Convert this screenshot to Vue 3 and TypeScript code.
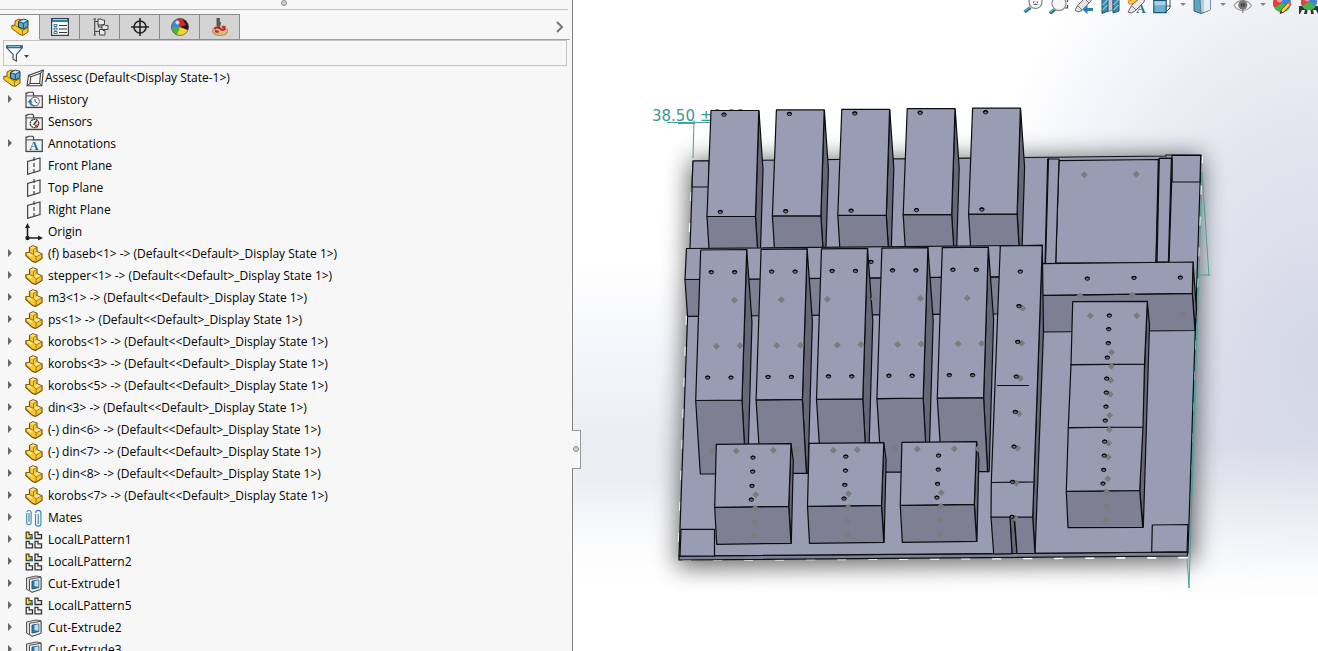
<script setup lang="ts">
import { ref } from 'vue'

type Pt = [number, number]
interface Face { pts: string; tone: 'top' | 'front' | 'side' }
interface TreeItem { label: string; icon: string; open: boolean }

const STATE = '(Default<<Default>_Display State 1>)'
const item = (icon: string, label: string, open = true): TreeItem => ({ icon, label, open })
const part = (name: string): TreeItem => item('part', `${name} -> ${STATE}`)

const tabs = [
  { icon: 'assembly', label: 'FeatureManager' },
  { icon: 'props', label: 'PropertyManager' },
  { icon: 'config', label: 'ConfigurationManager' },
  { icon: 'target', label: 'DimXpertManager' },
  { icon: 'ball', label: 'DisplayManager' },
  { icon: 'cam', label: 'CAM Manager' }
]
const activeTab = ref(0)
const filter = ref('')

const items: TreeItem[] = [
  item('history', 'History'),
  item('sensors', 'Sensors', false),
  item('annot', 'Annotations'),
  item('plane', 'Front Plane', false),
  item('plane', 'Top Plane', false),
  item('plane', 'Right Plane', false),
  item('origin', 'Origin', false),
  part('(f) baseb<1>'),
  part('stepper<1>'),
  part('m3<1>'),
  part('ps<1>'),
  part('korobs<1>'),
  part('korobs<3>'),
  part('korobs<5>'),
  part('din<3>'),
  part('(-) din<6>'),
  part('(-) din<7>'),
  part('(-) din<8>'),
  part('korobs<7>'),
  item('mates', 'Mates'),
  item('pattern', 'LocalLPattern1'),
  item('pattern', 'LocalLPattern2'),
  item('cut', 'Cut-Extrude1'),
  item('pattern', 'LocalLPattern5'),
  item('cut', 'Cut-Extrude2'),
  item('cut', 'Cut-Extrude3')
]

const tools = [
  { icon: 'fit', label: 'Zoom to Fit', menu: false },
  { icon: 'area', label: 'Zoom to Area', menu: false },
  { icon: 'prev', label: 'Previous View', menu: false },
  { icon: 'section', label: 'Section View', menu: false },
  { icon: 'dynamic', label: 'Dynamic Annotation Views', menu: false },
  { icon: 'orient', label: 'View Orientation', menu: true },
  { icon: 'style', label: 'Display Style', menu: true },
  { icon: 'eye', label: 'Hide/Show Items', menu: true },
  { icon: 'appear', label: 'Edit Appearance', menu: false },
  { icon: 'scene', label: 'Apply Scene', menu: false }
]

const face = (tone: Face['tone'], pts: Pt[], dx = 0, dy = 0): Face => ({
  tone,
  pts: pts.map(([x, y]) => `${(x + dx).toFixed(1)},${(y + dy).toFixed(1)}`).join(' ')
})

const backBoxes: Face[] = []
const midBoxes: Face[] = []
const lowBoxes: Face[] = []
const holes: Pt[] = []
const marks: Pt[] = []

for (let i = 0; i < 5; i++) {
  const bx = i * 65.4
  const by = i * -0.6
  backBoxes.push(
    face('side', [[759, 111], [763, 170], [760.5, 249], [757.5, 249], [755.5, 216.5]], bx, by),
    face('front', [[707, 216.5], [755.5, 216.5], [757.5, 249], [709, 249]], bx, by),
    face('top', [[711, 110.5], [758.8, 110.5], [755.5, 216.5], [707, 216.5]], bx, by)
  )
  holes.push([724 + bx, 114.7 + by], [720.3 + bx, 212 + by])

  const mx = i * 60.4
  const my = i * -0.6
  midBoxes.push(
    face('side', [[746.7, 249.5], [752, 322], [747.5, 474], [746, 474], [742, 400]], mx, my),
    face('front', [[695.7, 400.5], [742, 400], [746, 474], [700.3, 474]], mx, my),
    face('top', [[700.7, 250], [746.7, 249.5], [742, 400], [695.7, 400.5]], mx, my)
  )
  holes.push(
    [711.3 + mx, 272.3 + my], [734.7 + mx, 272.3 + my],
    [707.7 + mx, 377.7 + my], [731 + mx, 377.7 + my]
  )
  marks.push([716.5 + mx, 346.2 + my], [740 + mx, 345.8 + my])
}

for (let i = 0; i < 3; i++) {
  const dx = i * 92.8
  const dy = i * -1
  lowBoxes.push(
    face('side', [[791, 443.7], [793.3, 461], [791.3, 543.3], [788.7, 506.3]], dx, dy),
    face('front', [[714.7, 507.3], [788.7, 506.3], [791, 543.3], [716.7, 544.3]], dx, dy),
    face('top', [[716.3, 444.3], [791, 443.7], [788.7, 506.3], [714.7, 507.3]], dx, dy)
  )
  holes.push([753 + dx, 457.7 + dy], [752.7 + dx, 471.7 + dy], [752 + dx, 486 + dy], [751.3 + dx, 499.7 + dy])
  marks.push([755.7 + dx, 494.7 + dy], [755.3 + dx, 508.3 + dy], [754.7 + dx, 522.3 + dy], [754.3 + dx, 536.3 + dy])
}

holes.push(
  [871, 262], [1020.3, 271.7], [1019, 306.3], [1017.7, 342], [1016.3, 376.7], [1015.3, 412],
  [1014, 446.7], [1012.5, 482], [1012, 517], [1087.3, 278.7], [1134, 278], [1180.3, 277.7],
  [1109.3, 315.7], [1108.7, 329.3], [1108.3, 343.3], [1107.3, 357.7], [1106.7, 378.7], [1106.3, 392.7],
  [1106, 406.7], [1105.3, 420.7], [1104.7, 441.7], [1104.3, 455.7], [1103.7, 470], [1103, 483.7]
)
marks.push(
  [734.3, 300.3], [781.3, 299.7], [827.3, 299.3], [874, 299], [920.3, 298.3], [967.3, 298],
  [1022.7, 308.3], [1021.7, 343.3], [1020.3, 378.3], [1019.3, 413.7], [1017.7, 448.3], [1016.3, 483.3], [1015.3, 518.3],
  [1080, 295.7], [1132.3, 295], [1183, 314.7], [1084.3, 174.7], [1136.3, 174.3],
  [1090.3, 315.7], [1136.7, 315.7], [1111.7, 352.3], [1111.3, 366.3], [1110.7, 380.3], [1110.3, 394.3],
  [1109.7, 415.3], [1109.3, 429.7], [1108.7, 443.3], [1108.3, 457.3], [1107.7, 478.7], [1106.7, 492],
  [1106.3, 506.3], [1105.7, 520.7],
  [736.3, 451], [773.3, 450.3], [833.3, 450.3], [857.3, 449.7], [917.3, 449], [954.3, 448.7],
  [712.3, 451], [796.7, 450], [894.3, 449], [978, 448.7]
)

const plate: Face[] = [
  face('front', [[679, 556], [1188, 552], [1187, 556], [679, 560]]),
  face('top', [[693, 161], [1026, 157.5], [1166, 156], [1166, 155], [1201, 155], [1188, 552], [679, 556], [690, 248]]),
  face('top', [[693, 161], [709, 161], [709, 187], [692, 187]]),
  face('top', [[1172, 155.3], [1200.7, 155.3], [1200, 182], [1172, 182]]),
  face('top', [[681, 529.3], [714.5, 529.3], [714.5, 556], [680, 556]]),
  face('top', [[1152.3, 525], [1188, 524.5], [1187, 551.7], [1151.7, 552]]),
  face('top', [[1059, 160.7], [1158.3, 159.5], [1156, 263], [1055.7, 263]]),
  face('side', [[1047.7, 159], [1049.5, 159], [1047, 264], [1045, 264]]),
  face('top', [[1048.5, 159], [1059, 159], [1055.7, 264], [1045.5, 264]]),
  face('side', [[1159.3, 158.3], [1172, 158.3], [1172, 172], [1169, 262], [1156, 262]]),
  face('top', [[1159.3, 158.3], [1171.4, 158.3], [1168.4, 262], [1157, 262]])
]

const rails: Face[] = [
  face('front', [[685, 279.5], [1000, 276.8], [1000, 313.8], [687.5, 316.3]]),
  face('top', [[686.5, 248.5], [1042.3, 245.3], [1042, 276.5], [685, 279.5]])
]

const rightRail: Face[] = [
  face('side', [[1193, 262], [1196.5, 310], [1195, 330.5], [1192.3, 293.3]]),
  face('front', [[1041, 295.3], [1192.3, 293.3], [1195, 330.5], [1043, 332]]),
  face('top', [[1041.7, 263.7], [1193, 262], [1192.3, 293.3], [1041, 295.3]])
]

const stack: Face[] = [
  face('side', [[1147.3, 301.3], [1149.5, 325], [1143.3, 527.3], [1139.7, 490.5]]),
  face('front', [[1066.3, 491.3], [1139.7, 490.5], [1142.7, 527.3], [1068, 527.7]]),
  face('top', [[1068.3, 427.7], [1143, 427], [1139.7, 490.5], [1066.3, 491.3]]),
  face('top', [[1071, 364.7], [1144.5, 364.2], [1143, 427], [1068.3, 427.7]]),
  face('top', [[1072.7, 301.7], [1147.3, 301.3], [1144.5, 364.2], [1071, 364.7]])
]

const column: Face[] = [
  face('side', [[1042.3, 245.3], [1043.5, 331], [1035, 553.5], [1032.7, 517]]),
  face('side', [[1010, 517], [1014, 517], [1017, 553.5], [1012, 553.5]]),
  face('front', [[991, 517], [1010, 517], [1012, 553.7], [993.7, 554]]),
  face('front', [[1014.5, 517], [1032.7, 517], [1035, 553.5], [1017, 553.5]]),
  face('top', [[1000.3, 246], [1042.3, 245.3], [1032.7, 517], [991, 517], [991.3, 482]])
]

const scene: Face[] = [...plate, ...backBoxes, ...rails, ...midBoxes, ...lowBoxes, ...rightRail, ...stack, ...column]
</script>

<template>
  <svg class="defs" aria-hidden="true">
    <symbol id="i-part" viewBox="0 0 18 18">
      <path d="M4.500 2.500 8 .8l4 1.400v4.600l5 2v4.600l-6.500 4-3.200-1L.8 10.500V7.800l3.700-.4z" fill="#f6c72f" stroke="#755511" stroke-width="1.200" stroke-linejoin="round" />
      <path d="m4.800 2.800 3.200-1.500 3.500 1.200-3 1.600zM8.700 9.200l3.400-1.900 4.300 1.700-5.300 3zM1.500 8.200l3-.4 3 3-2.300 1z" fill="#ffe794" />
      <path d="M8.500 4.200v5l2.600 2.900v4.800M8.500 4.200l3-1.600M11 12l5.500-3M4.600 7.500l3.900 1.800" fill="none" stroke="#8b6818" stroke-width=".8" />
    </symbol>
    <symbol id="i-assembly" viewBox="0 0 18 18">
      <path d="M4 3 8 1l3 1v5l6 2v5l-5 3.500-3-1L.8 10.500V7.500L4 7z" fill="#fbcb24" stroke="#7d5c10" stroke-linejoin="round" />
      <path d="m1.500 8 3-.5 7 5v4.300M11.500 12.500l5-2.500" fill="none" stroke="#96701a" stroke-width=".9" />
      <path d="m7.500 3.500 5-2.500 4.500 1.500v6l-4.700 2.500-4.800-2z" fill="#5fa9ca" stroke="#17384b" />
      <path d="m8 3.700 4.500-2.100 3.900 1.200-3.900 2z" fill="#bfe2f2" />
      <path d="m7.800 3.800 4.600 1.500v5.400M12.400 5.300 17 2.800" fill="none" stroke="#17384b" stroke-width=".8" />
    </symbol>
    <symbol id="i-props" viewBox="0 0 18 18">
      <rect x=".6" y=".6" width="16.800" height="16.800" fill="#f6f8f9" stroke="#2f4350" stroke-width="1.200" />
      <path d="M1 1h16v3H1z" fill="#2f7ea3" /><path d="M2 1.500h14" stroke="#9fd4ea" />
      <path d="M3 6.500h3v2H3zM3 10h3v2H3zM3 13.500h3v2H3z" fill="#fff" stroke="#2b6d8e" stroke-width=".9" />
      <path d="M8 7.500h8M8 11h8M8 14.500h8" stroke="#333" stroke-width="1.200" />
    </symbol>
    <symbol id="i-config" viewBox="0 0 18 18">
      <path d="M3.700 1v16M4 3.500h5M4 13.500h6M7.500 4v5h5" fill="none" stroke="#444" stroke-width="1.100" />
      <path d="M7 1h3l1 1h2.500v5H7zM11 6.500h2.500l1 1H17v4h-6zM8.500 11.500H11l1 1h2v4.500H8.500z" fill="#e8e8e8" stroke="#444" />
      <path d="M2.500 1h2.500M2.500 17H5" stroke="#444" />
    </symbol>
    <symbol id="i-target" viewBox="0 0 18 18">
      <circle cx="9" cy="9" r="6" fill="none" stroke="#222" stroke-width="1.600" />
      <path d="M9 0v18M0 9h18" stroke="#222" stroke-width="1.600" />
    </symbol>
    <symbol id="i-ball" viewBox="0 0 18 18">
      <circle cx="9" cy="9" r="8.500" fill="#e3382c" />
      <path d="M9 9 .7 10.500A8.500 8.500 0 0 1 6 1z" fill="#3f86d8" />
      <path d="M9 9 .5 9.500a8.500 8.500 0 0 0 6 7.700z" fill="#46b53b" />
      <path d="m9 9-3 8a8.500 8.500 0 0 0 11-5z" fill="#f5d52a" />
      <path d="M9 9 11 .8A8.500 8.500 0 0 1 17 12z" fill="#1d1d22" />
      <path d="M6 1a8.500 8.500 0 0 1 5-.2L15 7 9 9z" fill="#d8281f" />
      <circle cx="6.500" cy="4.500" r="2" fill="#fff" opacity=".7" />
      <circle cx="9" cy="9" r="8.500" fill="none" stroke="#555" stroke-width=".7" />
    </symbol>
    <symbol id="i-cam" viewBox="0 0 18 20">
      <path d="M1 12v4C2 20.500 16 20.500 17 16v-4z" fill="#d9b878" stroke="#8a6838" stroke-width=".7" />
      <ellipse cx="9" cy="12" rx="8" ry="4" fill="#dcc092" />
      <path d="M3 12.500c1-3 5-2.500 6-.8s4 2.200 6-.2M3.500 14.500l4 1M11.500 9.500l3.500 1" fill="none" stroke="#b92b20" stroke-width="2.600" />
      <path d="M5.500 0h3v5h1.500L8 11.500 5.500 8z" fill="#555c62" stroke="#333" stroke-width=".5" />
    </symbol>
    <symbol id="i-funnel" viewBox="0 0 18 19">
      <path d="M.8 1.500h16.400v2L11 10.500v7l-3.500-2v-5L.8 3.500z" fill="#fff" stroke="#4a4f53" stroke-width="1.300" />
      <path d="M.6 1h16.800v3H.6z" fill="#1e6a8d" /><path d="M2 2.200h13" stroke="#9cd1e6" stroke-width=".9" />
    </symbol>
    <symbol id="i-frame" viewBox="0 0 18 18">
      <path d="M1 16.800 2.500 6.500 17.300 1l-1.500 15.800zM4 14.500l.8-6.700 9.700-3.500-.8 10.200z" fill="#fff" fill-rule="evenodd" stroke="#3c3c3c" stroke-width="1.100" />
      <path d="m2.500 6.500 2.300 1.300M17.300 1l-2.800 3.300M1 16.800l3-2.300M15.800 16.800l-2-2.300" stroke="#3c3c3c" />
    </symbol>
    <symbol id="i-folder" viewBox="0 0 18 17">
      <path d="M1 16V1.700h1.500L3.500.6h4l1 1.100v2.600h8.800V16z" fill="#f2f2f2" stroke="#444" stroke-width="1.200" />
      <path d="M1 4.400h8" stroke="#555" /><path d="M1 16h16.500" stroke="#444" stroke-width="1.300" />
    </symbol>
    <symbol id="i-history" viewBox="0 0 18 17">
      <use href="#i-folder" width="18" height="17" />
      <circle cx="10" cy="10" r="4.300" fill="#fff" stroke="#777" stroke-width="1.100" />
      <path d="M10 7.500V10l2.500 1.500" fill="none" stroke="#444" />
      <path d="M9.500 14.300C6.500 14 5 12.500 5 10" fill="none" stroke="#2b7da8" stroke-width="1.600" /><path d="M2.500 11 5 7.500 7.800 11z" fill="#2b7da8" />
    </symbol>
    <symbol id="i-sensors" viewBox="0 0 18 17">
      <use href="#i-folder" width="18" height="17" />
      <circle cx="9.500" cy="10" r="4.200" fill="#fff" stroke="#333" stroke-width="1.300" stroke-dasharray="2 .6" />
      <path d="m8.500 11.500 3-4" stroke="#222" stroke-width="1.300" /><path d="m10 11 3 0-1.500 3-1.500-.5z" fill="#e03822" />
    </symbol>
    <symbol id="i-annot" viewBox="0 0 18 17">
      <use href="#i-folder" width="18" height="17" />
    </symbol>
    <symbol id="i-plane" viewBox="0 0 18 18">
      <path d="M2.600 4.500v12.800L15 13.500V1z" fill="none" stroke="#444" stroke-width="1.200" />
      <path d="M9 0v17.500" stroke="#333" stroke-width="1.100" stroke-dasharray="4 2" />
    </symbol>
    <symbol id="i-origin" viewBox="0 0 18 18">
      <path d="M2.500 3v12H15" fill="none" stroke="#222" stroke-width="1.600" />
      <path d="M0 5 2.500 0 5 5zM13 12.500l5 2.500-5 2.500z" fill="#222" /><circle cx="2.500" cy="15" r="2.200" fill="#222" />
    </symbol>
    <symbol id="i-mates" viewBox="0 0 18 18">
      <path d="M1.700 4v9.500a2.200 2.200 0 0 0 4.400 0V3.200a2.200 2.200 0 0 0-4.300 0M4 4v9" fill="none" stroke="#3b87ae" stroke-width="1.100" />
      <path d="M10.500 5v9.500a2.700 2.700 0 0 0 5.400 0V4a2.600 2.600 0 0 0-5.300 0M13.200 5v10" fill="none" stroke="#3b87ae" stroke-width="1.100" />
    </symbol>
    <symbol id="i-pattern" viewBox="0 0 18 18">
      <path d="M1.200 1.200H4v2.500h3v3.800H1.200z" fill="#ffdf55" stroke="#59430c" stroke-width="1.300" /><path d="M4.500 5.500H8v2.700H4.500z" fill="#1f7ba4" />
      <path d="M10 1.200h3v2.500h3.500v3.800H10zM1.200 10.300h3v2.500H7.500v4H1.200zM10 10.300h3v2.500h3.500v4H10z" fill="#f2f2f2" stroke="#333" stroke-width="1.300" />
    </symbol>
    <symbol id="i-cut" viewBox="0 0 18 18">
      <path d="M1.500 3 11 1l5 .8v12.500L7 17.200l-5.500-3z" fill="#dcdcdc" stroke="#555" />
      <path d="m4.500 4.300 11.500-2v12L7 17.200l-2.500-2z" fill="#f2f2f2" stroke="#555" />
      <path d="M7 6.200 13.800 5v7.500L7 14z" fill="#2f7fa8" stroke="#1c5370" /><path d="M9.500 5.900v5.200l4 .8V5.200z" fill="#bce0ef" />
    </symbol>
    <symbol id="i-fit" viewBox="0 0 20 20">
      <path d="m1.500 18 6-4.500" stroke="#2a7199" stroke-width="3.400" /><path d="m1.500 17.300 5.500-4.200" stroke="#7fb9d4" />
      <circle cx="12.500" cy="8" r="6.500" fill="#f8fafb" stroke="#8a8d90" stroke-width="1.300" />
      <path d="M10 7.500v2l2-2zM15 7.500v2l-2-2zM9.500 11l3-1.500 3 1.500" fill="#555" />
    </symbol>
    <symbol id="i-area" viewBox="0 0 20 20">
      <path d="m.8 19.500 6-5" stroke="#2a7199" stroke-width="3.400" /><path d="m1 18.500 5-4" stroke="#7fb9d4" />
      <circle cx="10" cy="9.500" r="7" fill="#f4f6f7" stroke="#909396" stroke-width="1.300" />
      <path d="M16 1.500h2.500V4M18.500 6v2M18.500 11v3H16" fill="none" stroke="#444" stroke-width="1.200" />
    </symbol>
    <symbol id="i-prev" viewBox="0 0 20 20">
      <path d="m0 16 3-5 8-8h5v4l-9 9.500-4 1.500z" fill="#e3e3e3" stroke="#666" /><path d="m3 12 4 4M10 5l4 4" stroke="#777" />
      <path d="M7.500 15.500 12.500 11v3H18v3h-5.500v3z" fill="#2c7fab" />
    </symbol>
    <symbol id="i-section" viewBox="0 0 20 20">
      <path d="m6 5 6-3v14l-6 2z" fill="#c9cbce" stroke="#777" stroke-width=".8" />
      <path d="m1 5 6-2v14l-6 2.500zM12 5l6-2v14l-6 2z" fill="#3b8ab1" stroke="#1f546f" />
      <path d="m1.500 11 5-5M1.500 16l5-5M12.500 11l5-5M12.500 16l5-5" stroke="#c6e4f1" />
    </symbol>
    <symbol id="i-dynamic" viewBox="0 0 20 20">
      <path d="M2 10 1 7l4-1 2-5 4 4 6-1-3 6z" fill="#ffc93b" stroke="#d8872a" />
      <path d="m1 18 4-7 8-7h5l-1 4-9 9-4 2z" fill="#e8e8e8" stroke="#666" /><path d="m5 12 4 4" stroke="#777" />
    </symbol>
    <symbol id="i-orient" viewBox="0 0 20 20">
      <path d="M5 2h12v12l-4 4M13 6l4-4M13 12h5" fill="#fff" stroke="#555" />
      <path d="M.8 6.500h12.400v12.200H.8z" fill="#6db1d0" stroke="#1c5370" stroke-width="1.200" /><path d="M1.500 7.200h11v4h-11z" fill="#a5d3e7" />
    </symbol>
    <symbol id="i-style" viewBox="0 0 20 20">
      <path d="m1 4 7-3 9 2v13l-9 3.500L1 17z" fill="#5ea4c4" stroke="#3b5a69" /><path d="m7 6 10-3v13l-9 3.500z" fill="#a9d2e4" stroke="#4d6f80" stroke-width=".8" />
      <path d="M11 5v13l6-2V3z" fill="#e6eef2" />
    </symbol>
    <symbol id="i-eye" viewBox="0 0 20 20">
      <path d="M1 11.500C5 5 14 5 18.500 11.500 14 18 5 18 1 11.500z" fill="#f6f6f6" stroke="#999" stroke-width="1.200" />
      <circle cx="9.800" cy="11" r="4.600" fill="#777" /><circle cx="9.800" cy="11" r="2" fill="#333" /><path d="M9.800 3v16" stroke="#777" />
    </symbol>
    <symbol id="i-ball3" viewBox="0 0 16 16">
      <circle cx="8" cy="8" r="8" fill="#3c83dd" /><path d="M8 8V0a8 8 0 0 0-7 12z" fill="#df4238" /><path d="M8 8 1 12a8 8 0 0 0 14 0z" fill="#45b649" /><circle cx="6" cy="5" r="2.500" fill="#fff" opacity=".5" />
    </symbol>
    <symbol id="i-appear" viewBox="0 0 20 20">
      <use href="#i-ball3" width="18" height="18" />
      <path d="m7 19.500 1.500-4 7-7.500 2.500 2.500-7 7.500z" fill="#f6cd56" stroke="#6d4d18" /><path d="m14.500 9 2.500 2.500 1.500-1.500L16 7.500z" fill="#e46a5c" /><path d="m7 19.500 1-2.500 1.500 1.500z" fill="#222" />
    </symbol>
    <symbol id="i-scene" viewBox="0 0 20 20">
      <path d="M0 12h20v8H0z" fill="#333" /><path d="m1 20 2-4h3l-1 4zM8 20l.5-4h3l.5 4zM15 20l-1-4h3l2 4z" fill="#f1f1f1" />
      <use href="#i-ball3" x="2" width="16" height="16" />
    </symbol>
  </svg>

  <main class="app">
    <section class="panel">
      <div class="grip"><span class="dot"></span></div>
      <div class="tabs" role="tablist">
        <button
          v-for="(tab, i) in tabs"
          :key="tab.icon"
          class="tab"
          :class="{ active: i === activeTab }"
          role="tab"
          type="button"
          :aria-label="tab.label"
          :aria-selected="i === activeTab"
          @click="activeTab = i"
        >
          <svg class="tab-icon"><use :href="`#i-${tab.icon}`" /></svg>
        </button>
        <button class="more" type="button" aria-label="More tabs">
          <svg class="chevron" viewBox="0 0 8 12"><path d="m1 1 5 5-5 5" fill="none" stroke="#777" stroke-width="2" /></svg>
        </button>
      </div>
      <div class="filter">
        <button class="funnel" type="button" aria-label="Filter options">
          <svg class="funnel-icon"><use href="#i-funnel" /></svg>
          <svg class="drop" viewBox="0 0 5 3"><path d="M0 0h5L2.500 3z" fill="#444" /></svg>
        </button>
        <input v-model="filter" class="query" type="text" aria-label="Filter tree" />
      </div>
      <ul class="tree">
        <li class="row root">
          <svg class="icon"><use href="#i-assembly" /></svg>
          <svg class="icon frame"><use href="#i-frame" /></svg>
          <span class="root-label">Assesc  (Default&lt;Display State-1&gt;)</span>
        </li>
        <li v-for="it in items" :key="it.label" class="row">
          <button v-if="it.open" class="expand" type="button" :aria-label="`Expand ${it.label}`">
            <svg class="arrow" viewBox="0 0 4 8"><path d="M0 0v8l4-4z" fill="#666" /></svg>
          </button>
          <span v-else class="expand"></span>
          <svg class="icon">
            <use :href="`#i-${it.icon}`" />
            <text v-if="it.icon === 'annot'" class="letter" x="9" y="15" text-anchor="middle">A</text>
          </svg>
          <span class="label">{{ it.label }}</span>
        </li>
      </ul>
    </section>

    <section class="view">
      <svg class="scene" viewBox="573 0 745 651" preserveAspectRatio="xMidYMid meet" role="img" aria-label="Assembly model">
        <defs>
          <filter id="soft" x="-20%" y="-20%" width="140%" height="140%"><feGaussianBlur stdDeviation="12" /></filter>
        </defs>
        <polygon class="shadow" points="690,160 1202,156 1194,562 677,567" filter="url(#soft)" />
        <g class="dim">
          <text x="652" y="121">38.50 ±0.01</text>
          <path d="M667 122.500h44M678 123.500h17M694 120l-1 38" />
          <path d="M1202 172l-5 160-8 256-2-32M1202 172l7 104M1198 275h12" />
          <path class="thick" d="M1197 300 1191 500" />
        </g>
        <path class="gleam" d="M693 161 689 248 678.500 560 1187 557.500 1202 156" />
        <polygon v-for="(f, i) in scene" :key="i" :class="f.tone" :points="f.pts" />
        <path class="edge" d="M991.300 482.500 1033.500 482M997 385.500h32M1040 245.500 1042.500 246" />
        <path v-for="(m, i) in marks" :key="`m${i}`" class="mark" :transform="`translate(${m[0]} ${m[1]})`" d="M0-3.500 3.500 0 0 3.500-3.500 0z" />
        <g v-for="(h, i) in holes" :key="`h${i}`" :transform="`translate(${h[0]} ${h[1]})`">
          <ellipse class="hole" rx="2.200" ry="1.600" />
          <path class="rim" d="M-2.200-.3C-1.500-2.200 1.500-2.200 2.200-.3" />
        </g>
      </svg>
      <div class="tools" role="toolbar" aria-label="View">
        <template v-for="t in tools" :key="t.icon">
          <button class="tool" type="button" :aria-label="t.label">
            <svg class="tool-icon">
              <use :href="`#i-${t.icon}`" />
              <text v-if="t.icon === 'dynamic'" class="letter" x="14" y="19" text-anchor="middle">A</text>
            </svg>
          </button>
          <button v-if="t.menu" class="menu" type="button" :aria-label="`${t.label} options`">
            <svg class="menu-icon" viewBox="0 0 6 3"><path d="M0 0h6L3 3z" fill="#888" /></svg>
          </button>
        </template>
      </div>
      <button class="handle" type="button" aria-label="Collapse panel"><span class="dot"></span></button>
    </section>
  </main>
</template>

<style>
body {
  margin: 0;
}
</style>

<style scoped>
.defs {
  position: absolute;
  width: 0;
  height: 0;
}
.app {
  display: flex;
  height: 100vh;
  overflow: hidden;
  font: 12px/22px "Open Sans", "Noto Sans", sans-serif;
  color: #000;
}
button {
  margin: 0;
  padding: 0;
  border: 0;
  background: none;
}
.panel {
  box-sizing: border-box;
  flex: 0 0 573px;
  display: flex;
  flex-direction: column;
  overflow: hidden;
  background: #f7f7f7;
  border-right: 1px solid #808080;
}
.grip {
  box-sizing: border-box;
  flex: none;
  height: 10px;
  margin-right: 4px;
  border-bottom: 1px solid #c3c3c3;
  display: flex;
  justify-content: center;
}
.dot {
  box-sizing: border-box;
  width: 6px;
  height: 6px;
  border: 1px solid #8c8c8c;
  border-radius: 50%;
  background: #d0d0d0;
}
.tabs {
  box-sizing: border-box;
  flex: none;
  display: flex;
  height: 26px;
  margin: 4px 2px 0 0;
  border-bottom: 1px solid #a3a3a3;
}
.tab {
  box-sizing: border-box;
  width: 40px;
  height: 26px;
  display: flex;
  align-items: center;
  justify-content: center;
  background: #d4d4d4;
  border: solid #8c8c8c;
  border-width: 1px 1px 1px 0;
}
.tab.active {
  background: #f7f7f7;
  border-bottom-color: #f7f7f7;
}
.tab-icon {
  width: 18px;
  height: 18px;
}
.more {
  width: 20px;
  margin-left: auto;
  display: flex;
  align-items: center;
  justify-content: center;
}
.chevron {
  width: 8px;
  height: 12px;
}
.filter {
  box-sizing: border-box;
  flex: none;
  display: flex;
  height: 26px;
  margin: 0 5px 0 3px;
  border: 1px solid #c3c3c3;
}
.funnel {
  display: flex;
  align-items: center;
  gap: 1px;
  padding-left: 2px;
}
.funnel-icon {
  width: 17px;
  height: 19px;
}
.drop {
  width: 5px;
  height: 3px;
  margin-top: 6px;
}
.query {
  flex: 1;
  min-width: 0;
  border: 0;
  outline: 0;
  background: transparent;
  font: inherit;
}
.tree {
  flex: 1;
  min-height: 0;
  overflow: hidden;
  margin: 1px 0 0;
  padding: 0;
  list-style: none;
}
.row {
  display: flex;
  align-items: center;
  height: 22px;
  white-space: pre;
}
.root {
  padding-left: 3px;
}
.icon {
  flex: none;
  width: 18px;
  height: 18px;
}
.letter {
  font: bold 13px "Liberation Serif", serif;
  fill: #1f6f96;
}
.frame {
  margin-left: 5px;
}
.root-label {
  margin-left: 1px;
}
.expand {
  flex: none;
  width: 17px;
  height: 22px;
  margin-right: 8px;
  padding: 0 0 2px 8px;
  box-sizing: border-box;
  display: flex;
  align-items: center;
}
.arrow {
  width: 4px;
  height: 8px;
}
.label {
  margin-left: 5px;
}
.view {
  position: relative;
  flex: 1;
  min-width: 0;
  background:
    linear-gradient(180deg, transparent 68%, #fff 92%),
    radial-gradient(ellipse 48% 78% at 100% 55%, #d3d8e6, rgba(211, 216, 230, 0.6) 50%, transparent),
    linear-gradient(180deg, #fff 40%, #e6e9f1 74%, #fff 92%);
}
.scene {
  display: block;
  width: 100%;
  height: 100%;
}
.shadow {
  fill: #000;
  opacity: 0.6;
}
.top,
.front,
.side {
  stroke: #0c0d10;
  stroke-width: 1.2px;
  stroke-linejoin: round;
}
.top {
  fill: #999db3;
}
.front {
  fill: #7d7f92;
}
.side {
  fill: #666878;
}
.edge {
  fill: none;
  stroke: #0c0d10;
  stroke-width: 1.2px;
}
.gleam {
  fill: none;
  stroke: #fff;
  stroke-width: 2px;
  stroke-dasharray: 9 22;
}
.mark {
  fill: #7c7c7c;
}
.hole {
  fill: #6b6e7e;
  stroke: #16171b;
  stroke-width: 1px;
}
.rim {
  fill: none;
  stroke: #000;
  stroke-width: 1.2px;
}
.dim {
  fill: #369992;
  font: 15px "DejaVu Sans", sans-serif;
}
.dim path {
  fill: none;
  stroke: #45a39d;
  stroke-width: 1px;
}
.dim .thick {
  stroke-width: 2px;
}
.tools {
  position: absolute;
  top: -6px;
  right: -1px;
  display: flex;
  gap: 6px;
}
.tool,
.tool-icon {
  display: block;
  width: 20px;
  height: 20px;
}
.menu {
  width: 14px;
  height: 20px;
  margin: 0 -3px;
  display: flex;
  align-items: center;
  justify-content: center;
}
.menu-icon {
  width: 6px;
  height: 3px;
}
.handle {
  box-sizing: border-box;
  position: absolute;
  left: -1px;
  top: 66%;
  width: 9px;
  height: 39px;
  display: flex;
  align-items: center;
  justify-content: center;
  background: #f7f7f7;
  border: 1px solid #999;
  border-left: 0;
}
</style>
